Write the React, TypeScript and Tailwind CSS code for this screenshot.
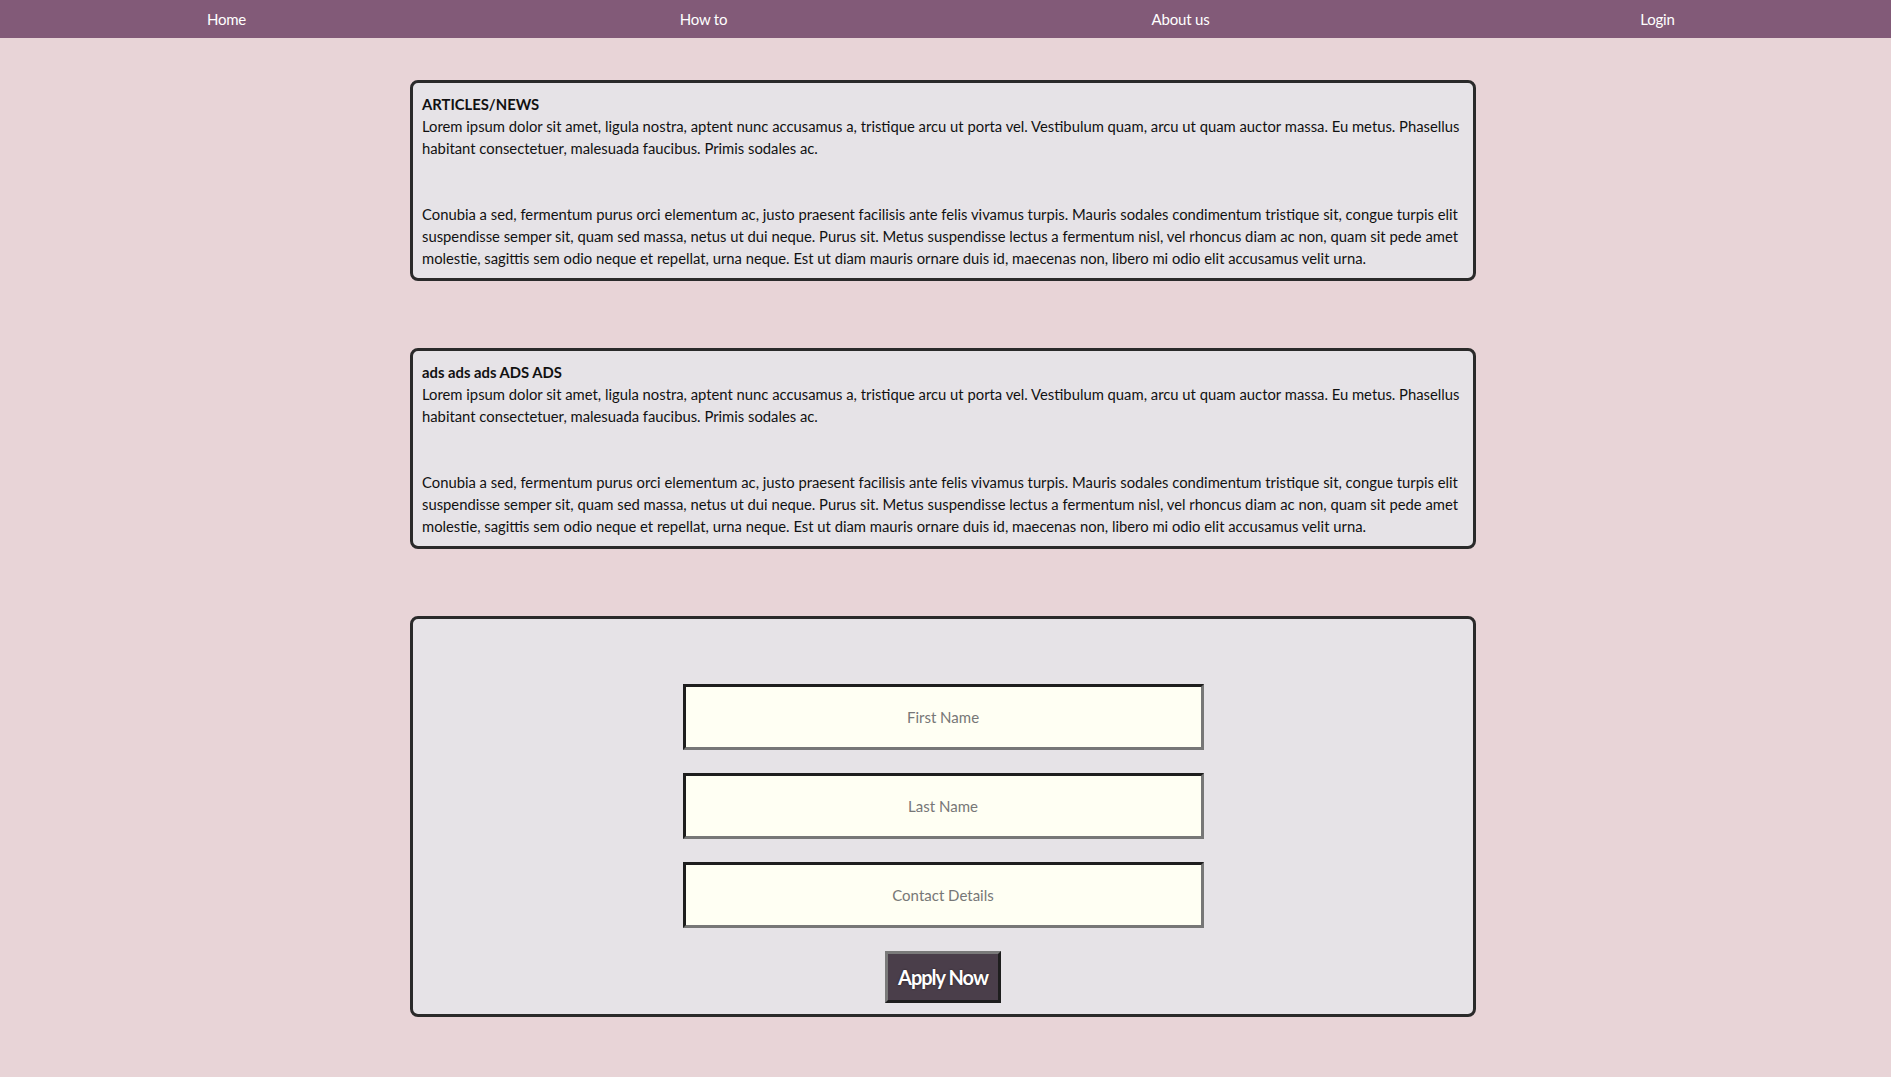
import { type ReactNode } from "react";

const navItems = ["Home", "How to", "About us", "Login"];

const lorem1 =
  "Lorem ipsum dolor sit amet, ligula nostra, aptent nunc accusamus a, tristique arcu ut porta vel. Vestibulum quam, arcu ut quam auctor massa. Eu metus. Phasellus habitant consectetuer, malesuada faucibus. Primis sodales ac.";
const lorem2 =
  "Conubia a sed, fermentum purus orci elementum ac, justo praesent facilisis ante felis vivamus turpis. Mauris sodales condimentum tristique sit, congue turpis elit suspendisse semper sit, quam sed massa, netus ut dui neque. Purus sit. Metus suspendisse lectus a fermentum nisl, vel rhoncus diam ac non, quam sit pede amet molestie, sagittis sem odio neque et repellat, urna neque. Est ut diam mauris ornare duis id, maecenas non, libero mi odio elit accusamus velit urna.";

function Card({ children, className = "" }: { children: ReactNode; className?: string }) {
  return (
    <section
      className={`mx-auto w-[1066px] rounded-lg border-[3px] border-[#2a2a2a] bg-[#e6e3e7] ${className}`}
    >
      {children}
    </section>
  );
}

function TextCard({ title }: { title: string }) {
  return (
    <Card className="px-[9px] pt-[10px] pb-[9px] text-[14.8px] leading-[22px] text-[#111]">
      <h2 className="font-bold">{title}</h2>
      <p>{lorem1}</p>
      <p className="mt-[44px]">{lorem2}</p>
    </Card>
  );
}

function Field({ placeholder }: { placeholder: string }) {
  return (
    <input
      type="text"
      placeholder={placeholder}
      className="h-[66px] w-[521px] border-[3px] border-t-[#1e1e1e] border-l-[#1e1e1e] border-b-[#777] border-r-[#777] bg-[#fffff3] text-center text-[15px] text-[#333] outline-none placeholder:text-[#777]"
    />
  );
}

export default function App() {
  return (
    <div className="min-h-screen bg-[#e8d4d7] pb-[60px] font-['Lato','Open_Sans',sans-serif]">
      <nav className="h-[38px] overflow-hidden bg-[#825a78]">
        <div className="-ml-[12px] grid h-full w-[1908px] grid-cols-4 items-center text-[15px] tracking-[-0.2px] text-white">
          {navItems.map((item) => (
            <a key={item} href="#" className="text-center">
              {item}
            </a>
          ))}
        </div>
      </nav>

      <main className="flex flex-col gap-[67px] pt-[42px] pr-[5px]">
        <TextCard title="ARTICLES/NEWS" />
        <TextCard title="ads ads ads ADS ADS" />

        <Card className="flex flex-col items-center gap-[23px] pt-[65px] pb-[11px]">
          <Field placeholder="First Name" />
          <Field placeholder="Last Name" />
          <Field placeholder="Contact Details" />
          <button
            type="button"
            className="h-[52px] w-[116px] border-[3px] border-t-[#7a7a7a] border-l-[#7a7a7a] border-b-[#1e1e1e] border-r-[#1e1e1e] bg-[#4a3e4a] text-[20px] font-bold tracking-[-1px] text-white [text-shadow:0_0_2px_rgba(0,0,0,0.6)]"
          >
            Apply Now
          </button>
        </Card>
      </main>
    </div>
  );
}
